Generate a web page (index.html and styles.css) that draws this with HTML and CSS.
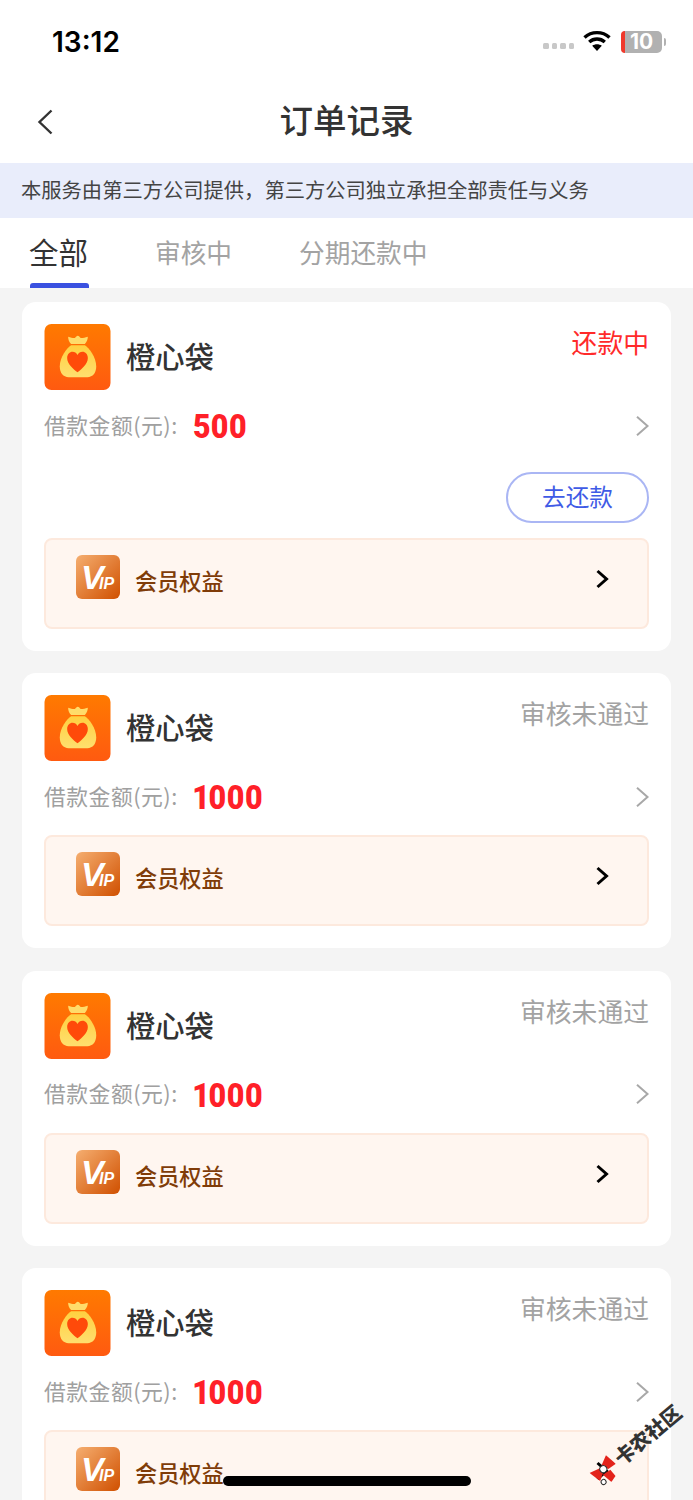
FILE: index.html
```html
<!DOCTYPE html>
<html lang="zh">
<head>
<meta charset="utf-8">
<title>订单记录</title>
<link rel="stylesheet" href="styles.css">
</head>
<body>
<svg class="defs" width="0" height="0">
  <defs>
    <linearGradient id="bagbg" x1="0" y1="0" x2="0" y2="1"><stop offset="0" stop-color="#ff7a00"/><stop offset="1" stop-color="#ff5a10"/></linearGradient>
    <linearGradient id="bagfill" x1="0" y1="0" x2="0" y2="1"><stop offset="0" stop-color="#ffd040"/><stop offset="1" stop-color="#ffdf6e"/></linearGradient>
    <linearGradient id="vipbg" x1="0" y1="0" x2="1" y2="1"><stop offset="0" stop-color="#f5ae70"/><stop offset="1" stop-color="#d05000"/></linearGradient>
    <symbol id="bag" viewBox="0 0 67 67">
      <rect width="67" height="67" rx="7" fill="url(#bagbg)"/>
      <path d="M24 13c2.800.9 4.500 1.400 6.800 1.300 1.100-.9 1.900-2.300 3-2.300s2 1.400 2.900 2.300c2.400.1 4.300-.5 7.300-1.300 0 2.400-1 5.400-3 7.200H27c-2-1.500-3-4.500-3-7.200z" fill="#ffdc6a"/>
      <path d="M27 21.500h14c4 2.500 11.500 12 11.500 21.500 0 7-3.500 11-9 11h-19c-5.500 0-9-4-9-11 0-9.500 7.500-19 11.500-21.500z" fill="url(#bagfill)"/>
      <path d="M33.500 49C29 45.500 23 40.500 23 34.500c0-3.800 2.600-6.300 5.400-6.300 2.300 0 3.900 1.100 5.100 3.200 1.200-2.100 2.800-3.200 5.100-3.200 2.800 0 5.400 2.500 5.400 6.300 0 6-6 11-10.500 14.500z" fill="#ff4a0a"/>
    </symbol>
    <symbol id="vip" viewBox="0 0 44 44">
      <rect width="44" height="44" rx="6" fill="url(#vipbg)"/>
      <text x="5" y="34" class="vip-v">V</text>
      <text x="23" y="34" class="vip-ip">IP</text>
    </symbol>
    <symbol id="chev-grey" viewBox="0 0 16 22">
      <path d="M3 1.800l10.500 9.200-10.500 9.200" fill="none" stroke="currentColor" stroke-width="2"/>
    </symbol>
    <symbol id="chev-black" viewBox="0 0 16 22">
      <path d="M3.500 3l9 8-9 8" fill="none" stroke="currentColor" stroke-width="3"/>
    </symbol>
  </defs>
</svg>

<div class="page">
  <header class="top">
    <div class="status">
      <span class="time">13:12</span>
      <div class="status-icons">
        <span class="dots"><i></i><i></i><i></i><i></i></span>
        <svg class="wifi" width="28" height="21" viewBox="0 0 28 21">
          <path d="M1.500 7.500C8.500 1 19.500 1 26.500 7.500" fill="none" stroke="#000" stroke-width="3.400"/>
          <path d="M6.200 12c4.500-4 11.100-4 15.600 0" fill="none" stroke="#000" stroke-width="3.400"/>
          <path d="M14 21l-4.800-5.200c2.800-2 6.800-2 9.600 0z" fill="#000"/>
        </svg>
        <span class="battery"><b class="batt-level"></b><span class="batt-num">10</span></span>
        <span class="batt-tip"></span>
      </div>
    </div>
    <div class="nav">
      <svg class="back" width="18" height="28" viewBox="0 0 18 28"><path d="M15.500 2.500L3.500 14l12 11.500" fill="none" stroke="#333" stroke-width="2.400"/></svg>
      <h1 class="title">订单记录</h1>
    </div>
  </header>
  <div class="notice">本服务由第三方公司提供，第三方公司独立承担全部责任与义务</div>
  <nav class="tabs">
    <a class="tab tab-active">全部</a>
    <a class="tab tab-mid">审核中</a>
    <a class="tab">分期还款中</a>
  </nav>

  <main class="list">
    <article class="card">
      <div class="head">
        <svg class="logo"><use href="#bag"/></svg>
        <span class="name">橙心袋</span>
        <span class="state state-red">还款中</span>
      </div>
      <div class="amount-row">
        <span class="label">借款金额(元):</span>
        <span class="amount">500</span>
        <svg class="arrow"><use href="#chev-grey"/></svg>
      </div>
      <div class="action-row"><span class="pay">去还款</span></div>
      <div class="vip-box vip-box-first">
        <svg class="vip-logo"><use href="#vip"/></svg>
        <span class="vip-text">会员权益</span>
        <svg class="vip-arrow"><use href="#chev-black"/></svg>
      </div>
    </article>

    <article class="card">
      <div class="head">
        <svg class="logo"><use href="#bag"/></svg>
        <span class="name">橙心袋</span>
        <span class="state">审核未通过</span>
      </div>
      <div class="amount-row">
        <span class="label">借款金额(元):</span>
        <span class="amount">1000</span>
        <svg class="arrow"><use href="#chev-grey"/></svg>
      </div>
      <div class="vip-box">
        <svg class="vip-logo"><use href="#vip"/></svg>
        <span class="vip-text">会员权益</span>
        <svg class="vip-arrow"><use href="#chev-black"/></svg>
      </div>
    </article>

    <article class="card">
      <div class="head">
        <svg class="logo"><use href="#bag"/></svg>
        <span class="name">橙心袋</span>
        <span class="state">审核未通过</span>
      </div>
      <div class="amount-row">
        <span class="label">借款金额(元):</span>
        <span class="amount">1000</span>
        <svg class="arrow"><use href="#chev-grey"/></svg>
      </div>
      <div class="vip-box">
        <svg class="vip-logo"><use href="#vip"/></svg>
        <span class="vip-text">会员权益</span>
        <svg class="vip-arrow"><use href="#chev-black"/></svg>
      </div>
    </article>

    <article class="card">
      <div class="head">
        <svg class="logo"><use href="#bag"/></svg>
        <span class="name">橙心袋</span>
        <span class="state">审核未通过</span>
      </div>
      <div class="amount-row">
        <span class="label">借款金额(元):</span>
        <span class="amount">1000</span>
        <svg class="arrow"><use href="#chev-grey"/></svg>
      </div>
      <div class="vip-box">
        <svg class="vip-logo"><use href="#vip"/></svg>
        <span class="vip-text">会员权益</span>
        <svg class="vip-arrow"><use href="#chev-black"/></svg>
      </div>
    </article>
  </main>

  <div class="home-bar"></div>
  <div class="watermark">
    <svg class="wm-icon" width="26" height="26" viewBox="0 0 26 26">
      <path d="M0 5l11 3-1 6-7 4z" fill="#e3231b"/>
      <path d="M14 7l10-5 2 13-9-1z" fill="#e3231b"/>
      <path d="M9 15l2 11 7-2 0-8z" fill="#e3231b"/>
      <circle cx="13" cy="11" r="3.500" fill="#fff" stroke="#333"/>
      <circle cx="5" cy="21" r="2.500" fill="#fff" stroke="#333"/>
    </svg>
    <span class="wm-text">卡农社区</span>
  </div>
</div>
</body>
</html>
```

FILE: styles.css
```css
* { box-sizing: border-box; }
html, body { margin: 0; padding: 0; }
body {
  width: 693px;
  height: 1500px;
  overflow: hidden;
  background: #f4f4f4;
  font-family: "Noto Sans CJK SC", "Noto Sans", sans-serif;
  color: #333;
}
.defs { position: absolute; }
.page { position: relative; height: 1500px; overflow: hidden; }

.top { background: #fff; height: 163px; }
.status {
  height: 75px;
  padding: 22px 27px 0 52px;
  display: flex;
  justify-content: space-between;
  align-items: flex-start;
}
.time {
  font-family: Inter, "Liberation Sans", sans-serif;
  font-size: 28px;
  font-weight: 600;
  line-height: 40px;
  color: #000;
}
.status-icons { display: flex; align-items: center; height: 40px; }
.dots { display: flex; gap: 3px; margin-right: 9px; margin-top: 8px; }
.dots i { width: 5.500px; height: 5.500px; border-radius: 1.500px; background: #c8c8c8; }
.wifi { margin-right: 10px; margin-top: -3px; }
.battery {
  position: relative;
  width: 41px;
  height: 22px;
  border-radius: 5px;
  background: #b1b1b1;
  display: flex;
  align-items: center;
  justify-content: center;
}
.batt-level { position: absolute; left: 0; top: 0; bottom: 0; width: 4px; background: #f0392c; border-radius: 4px 0 0 4px; }
.batt-num {
  position: relative;
  font-family: Inter, "Liberation Sans", sans-serif;
  font-size: 21px;
  font-weight: 700;
  color: #fff;
  line-height: 22px;
}
.batt-tip { width: 2px; height: 8px; margin-left: 2px; background: #b1b1b1; border-radius: 0 2px 2px 0; }

.nav {
  height: 88px;
  display: flex;
  align-items: center;
  justify-content: center;
  position: relative;
}
.back { position: absolute; left: 36px; top: 33px; }
.title { margin: 0; font-size: 33.500px; font-weight: 500; line-height: 88px; color: #333; }

.notice {
  height: 55px;
  background: #e9edfb;
  padding-left: 21px;
  font-size: 20.300px;
  line-height: 53px;
  color: #444;
  white-space: nowrap;
}

.tabs {
  height: 70px;
  background: #fff;
  padding-left: 29px;
  display: flex;
  align-items: flex-start;
}
.tab { font-size: 25.700px; line-height: 68px; color: #a3a3a3; height: 70px; }
.tab-active { position: relative; font-size: 29.500px; color: #333; width: 60px; margin-right: 66px; line-height: 66px; }
.tab-active::after {
  content: "";
  position: absolute;
  left: 1px;
  right: 0;
  bottom: 0;
  height: 5px;
  background: #3a51e0;
  border-radius: 3px 3px 0 0;
}
.tab-mid { margin-right: 67px; }

.list { padding: 14px 22px 0; display: flex; flex-direction: column; gap: 22.400px; }
.card { background: #fff; border-radius: 14px; padding: 22px; }
.head { height: 66px; display: flex; align-items: flex-start; }
.logo { width: 67px; height: 66px; flex: none; }
.name { margin-left: 15px; font-size: 29.300px; font-weight: 500; line-height: 62px; color: #333; }
.state { margin-left: auto; font-size: 25.800px; line-height: 36px; color: #a3a3a3; }
.state-red { color: #ff2a2a; }

.amount-row { height: 41px; margin-top: 15px; display: flex; align-items: center; }
.label { font-size: 21.800px; letter-spacing: 0.500px; color: #a0a0a0; width: 149px; line-height: 41px; margin-top: -3px; white-space: nowrap; }
.amount { font-family: Roboto, "Liberation Sans", sans-serif; font-size: 33px; font-weight: 900; font-variant-numeric: proportional-nums; color: #ff2028; line-height: 41px; margin-top: 2px; transform: scaleX(0.92); transform-origin: left center; }
.arrow { width: 16px; height: 22px; margin-left: auto; margin-right: -1px; color: #a8a8a8; }

.action-row { height: 51px; margin-top: 26px; display: flex; justify-content: flex-end; }
.pay {
  width: 143px;
  height: 51px;
  border: 2px solid #aab6f4;
  border-radius: 26px;
  text-align: center;
  font-size: 23.600px;
  line-height: 45px;
  color: #3f5be6;
}

.vip-box {
  height: 91px;
  margin-top: 18px;
  background: #fff6f0;
  border: 2px solid #fde9dd;
  border-radius: 8px;
  padding: 15px 37px 0 30px;
  display: flex;
  align-items: flex-start;
}
.vip-box-first { margin-top: 15px; }
.vip-logo { width: 44px; height: 44px; flex: none; }
.vip-text { margin-left: 15px; font-size: 22.200px; font-weight: 500; color: #803c08; line-height: 50px; }
.vip-arrow { width: 16px; height: 22px; margin-left: auto; margin-top: 13px; color: #000; }
.vip-v { font-family: "Liberation Sans", sans-serif; font-size: 34px; font-weight: 700; font-style: italic; fill: #fff; }
.vip-ip { font-family: "Liberation Sans", sans-serif; font-size: 16px; font-weight: 700; font-style: italic; fill: #fff; }

.home-bar {
  position: absolute;
  left: 223px;
  top: 1476px;
  width: 248px;
  height: 10px;
  border-radius: 5px;
  background: #000;
}
.watermark {
  position: absolute;
  left: 603px;
  top: 1463px;
  display: flex;
  align-items: center;
  transform: rotate(-40deg);
  transform-origin: left bottom;
}
.wm-icon { flex: none; }
.wm-text { font-size: 20px; font-weight: 900; color: #333; line-height: 26px; margin-left: 3px; white-space: nowrap; }
```
